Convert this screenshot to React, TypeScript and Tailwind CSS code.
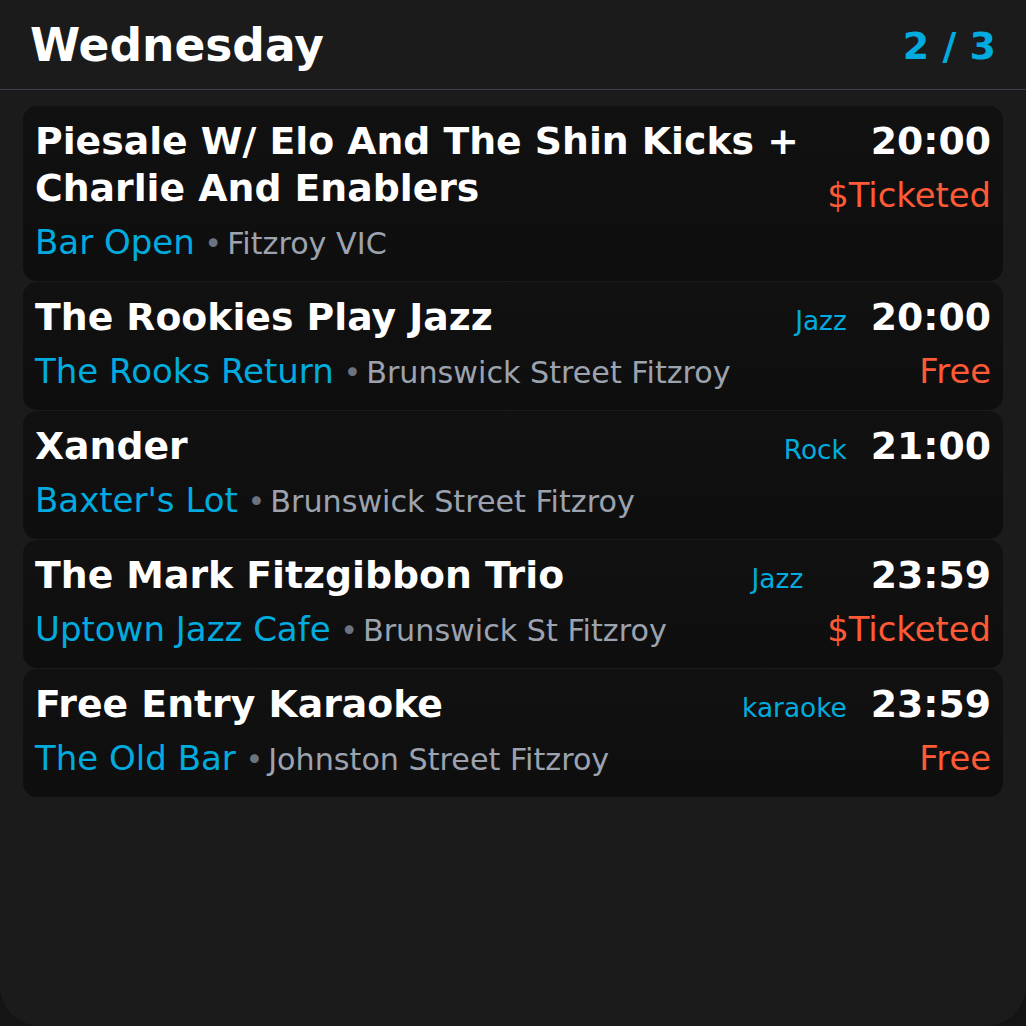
import React from "react";

type Ev = {
  title: string;
  venue: string;
  location: string;
  time: string;
  tag?: string;
  price?: string;
};

const events: Ev[] = [
  {
    title: "Piesale W/ Elo And The Shin Kicks + Charlie And Enablers",
    venue: "Bar Open",
    location: "Fitzroy VIC",
    time: "20:00",
    price: "$Ticketed",
  },
  {
    title: "The Rookies Play Jazz",
    venue: "The Rooks Return",
    location: "Brunswick Street Fitzroy",
    time: "20:00",
    tag: "Jazz",
    price: "Free",
  },
  {
    title: "Xander",
    venue: "Baxter's Lot",
    location: "Brunswick Street Fitzroy",
    time: "21:00",
    tag: "Rock",
  },
  {
    title: "The Mark Fitzgibbon Trio",
    venue: "Uptown Jazz Cafe",
    location: "Brunswick St Fitzroy",
    time: "23:59",
    tag: "Jazz",
    price: "$Ticketed",
  },
  {
    title: "Free Entry Karaoke",
    venue: "The Old Bar",
    location: "Johnston Street Fitzroy",
    time: "23:59",
    tag: "karaoke",
    price: "Free",
  },
];

function Card({ ev }: { ev: Ev }) {
  return (
    <div className="flex items-baseline gap-6 rounded-[14px] bg-gradient-to-b from-[#111111] to-[#0e0e0e] px-3 py-3">
      <div className="min-w-0 flex-1">
        <div className="text-[37.75px] font-bold leading-[47px] text-white">{ev.title}</div>
        <div className="mt-[6px] text-[34px] leading-[49.5px]">
          <span className="text-[#00acdf]">{ev.venue}</span>
          <span className="text-[30.2px] text-[#6b7280]"> •</span>
          <span className="ml-[5px] text-[30.2px] text-[#9ca3af]">{ev.location}</span>
        </div>
      </div>
      {ev.tag && <div className="text-[26.4px] text-[#00acdf]">{ev.tag}</div>}
      <div className="flex flex-col items-end text-right">
        <div className="text-[37.75px] font-bold leading-[47px] text-white">{ev.time}</div>
        {ev.price && (
          <div className="mt-[6px] text-[33.8px] leading-[49.5px] text-[#ff5a36]">{ev.price}</div>
        )}
      </div>
    </div>
  );
}

export default function App() {
  return (
    <div className="min-h-[1026px] w-full bg-[#141414] font-['DejaVu_Sans',sans-serif]">
      <div className="h-[1026px] w-full overflow-hidden rounded-b-[40px] bg-[#1b1b1b]">
        <div className="flex items-center justify-between border-b-[1.5px] border-[#3a404c] px-[30px] pb-[15px] pt-[18px]">
          <div className="text-[45.5px] font-bold leading-[56px] text-white">Wednesday</div>
          <div className="text-[38px] font-bold leading-[46px] text-[#00acdf]">2 / 3</div>
        </div>
        <div className="flex flex-col gap-[1.5px] px-[23px] pt-[16px]">
          {events.map((ev, i) => (
            <Card key={i} ev={ev} />
          ))}
        </div>
      </div>
    </div>
  );
}
